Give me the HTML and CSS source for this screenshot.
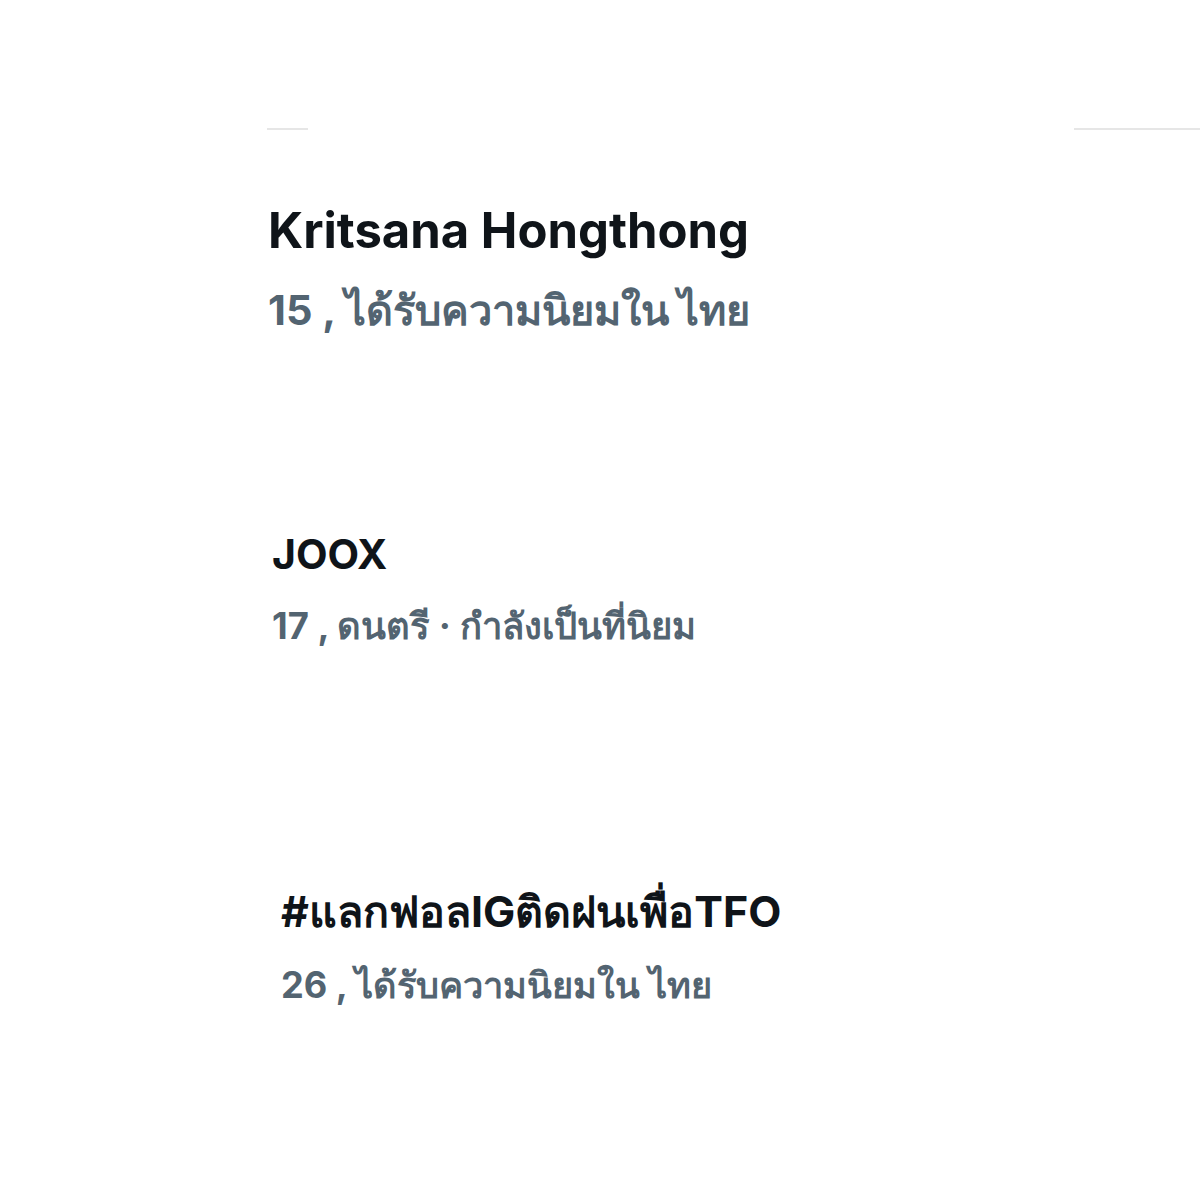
FILE: index.html
```html
<!DOCTYPE html>
<html lang="th">
<head>
<meta charset="utf-8">
<link rel="stylesheet" href="styles.css">
</head>
<body>
<div class="page">
  <div class="rules">
    <div class="rule rule-left"></div>
    <div class="rule rule-right"></div>
  </div>
  <div class="item item-1">
    <div class="title">Kritsana Hongthong</div>
    <div class="meta">15 , ได้รับความนิยมใน ไทย</div>
  </div>
  <div class="item item-2">
    <div class="title">JOOX</div>
    <div class="meta">17 , ดนตรี · กำลังเป็นที่นิยม</div>
  </div>
  <div class="item item-3">
    <div class="title">#แลกฟอลIGติดฝนเพื่อTFO</div>
    <div class="meta">26 , ได้รับความนิยมใน ไทย</div>
  </div>
</div>
</body>
</html>
```
FILE: styles.css
```css
html, body {
  margin: 0;
  padding: 0;
  background: #ffffff;
}
.page {
  width: 1200px;
  height: 1200px;
  font-family: Inter, "Noto Sans", sans-serif;
  font-weight: 700;
}
.rules {
  display: flex;
  justify-content: space-between;
  padding-top: 128px;
  height: 2px;
}
.rule {
  height: 2px;
  background: #e6e6e6;
}
.rule-left {
  width: 41px;
  margin-left: 267px;
}
.rule-right {
  width: 126px;
}
.item {
  display: flex;
  flex-direction: column;
}
.title {
  color: #0f1419;
  white-space: nowrap;
}
.meta {
  color: #536471;
  white-space: nowrap;
}
.item-1 {
  padding-left: 268px;
  margin-top: 65px;
}
.item-1 .title {
  font-size: 49px;
  line-height: 72px;
}
.item-1 .meta {
  font-size: 41.5px;
  line-height: 76px;
  margin-top: 5px;
}
.item-2 {
  padding-left: 272px;
  margin-top: 174px;
}
.item-2 .title {
  font-size: 41px;
  line-height: 64px;
}
.item-2 .meta {
  font-size: 36.4px;
  line-height: 80px;
}
.item-3 {
  padding-left: 281px;
  margin-top: 211px;
}
.item-3 .title {
  font-size: 43px;
  line-height: 68px;
}
.item-3 .meta {
  font-size: 36.2px;
  line-height: 80px;
}
```
